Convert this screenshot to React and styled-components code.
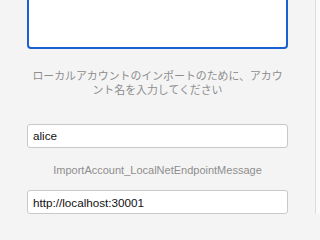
import React from 'react';
import styled, { createGlobalStyle } from 'styled-components';

const GlobalStyle = createGlobalStyle`
  html, body {
    margin: 0;
    padding: 0;
    height: 214px;
    overflow: hidden;
    background: #f4f4f4;
  }
  #root {
    height: 214px;
  }
`;

const Page = styled.div`
  display: flex;
  height: 214px;
  overflow: hidden;
`;

const Panel = styled.div`
  flex: 1;
  display: flex;
  flex-direction: column;
  padding: 0 27px;
  margin-top: -20px;
  background: #f4f4f4;
  border-right: 1px solid #dcdcdc;
`;

const ScrollTrack = styled.div`
  width: 4px;
  background: #fafafa;
`;

const KeyArea = styled.textarea`
  box-sizing: border-box;
  display: block;
  width: 100%;
  height: 72px;
  margin: 0;
  border: 2px solid #1a5fd3;
  border-radius: 4px;
  background: #fff;
  resize: none;
  outline: none;
`;

const Hint = styled.p`
  margin: ${(p) => p.$top}px 0 0;
  padding: 0 4px;
  text-align: center;
  color: #8e8e8e;
  font-family: ${(p) => (p.$cjk ? '"Noto Sans CJK JP", "Liberation Sans", sans-serif' : '"Liberation Sans", Arial, sans-serif')};
  font-size: ${(p) => (p.$cjk ? '10.9px' : '11px')};
  line-height: 14.4px;
`;

const Field = styled.input`
  box-sizing: border-box;
  display: block;
  width: 100%;
  height: 25px;
  margin: ${(p) => p.$top}px 0 0;
  padding: 0 5px;
  border: 1px solid #c9c9c9;
  border-radius: 3px;
  background: #fff;
  color: #111;
  font-family: "Liberation Sans", Arial, sans-serif;
  font-size: 11.7px;
  outline: none;
`;

const App = () => {
  return (
    <>
      <GlobalStyle />
      <Page>
        <Panel>
          <KeyArea />
          <Hint $cjk $top={19}>
            ローカルアカウントのインポートのために、アカウント名を入力してください
          </Hint>
          <Field $top={27} defaultValue="alice" />
          <Hint $top={15}>ImportAccount_LocalNetEndpointMessage</Hint>
          <Field $top={13} defaultValue="http://localhost:30001" />
        </Panel>
        <ScrollTrack />
      </Page>
    </>
  );
};

export default App;
